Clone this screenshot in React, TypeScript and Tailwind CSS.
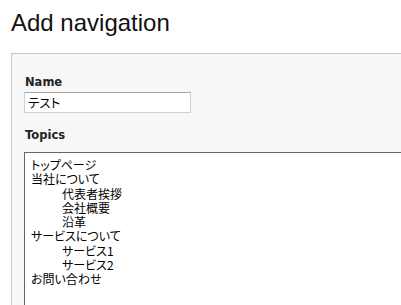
import React from "react";

const topics = [
  "トップページ",
  "当社について",
  "\t代表者挨拶",
  "\t会社概要",
  "\t沿革",
  "サービスについて",
  "\tサービス1",
  "\tサービス2",
  "お問い合わせ",
].join("\n");

export default function App() {
  return (
    <div className="w-[401px] h-[305px] overflow-hidden bg-white">
      <h1 className="ml-[11px] mt-[9px] text-[24px] leading-[28px] font-normal text-[#111] [font-family:'Liberation_Sans',Arial,sans-serif]">
        Add navigation
      </h1>
      <div className="ml-[11px] mt-[16px] w-[500px] h-[300px] border border-[#c8c8c8] bg-[#f7f7f7] pt-[21px] pl-[12px]">
        <div className="pl-px text-[11.5px] leading-[14px] font-bold text-[#222] [font-family:'DejaVu_Sans',Verdana,sans-serif]">
          Name
        </div>
        <input
          readOnly
          value="テスト"
          className="mt-[3px] block w-[167px] h-[21px] bg-white border border-[#d0d0d0] border-t-[#a8a8a8] px-[3px] text-[12.5px] text-black outline-none [font-family:'Noto_Sans_CJK_JP',sans-serif] [font-feature-settings:'palt']"
        />
        <div className="mt-[15px] pl-px text-[11.5px] leading-[14px] font-bold text-[#222] [font-family:'DejaVu_Sans',Verdana,sans-serif]">
          Topics
        </div>
        <textarea
          readOnly
          value={topics}
          className="mt-[10px] block w-[420px] h-[200px] resize-none bg-white border border-[#666] pl-[6px] pt-[5px] text-[12px] leading-[14.25px] text-black outline-none whitespace-pre [tab-size:31px] [font-family:'Noto_Sans_CJK_JP',sans-serif] [font-feature-settings:'palt']"
        />
      </div>
    </div>
  );
}
